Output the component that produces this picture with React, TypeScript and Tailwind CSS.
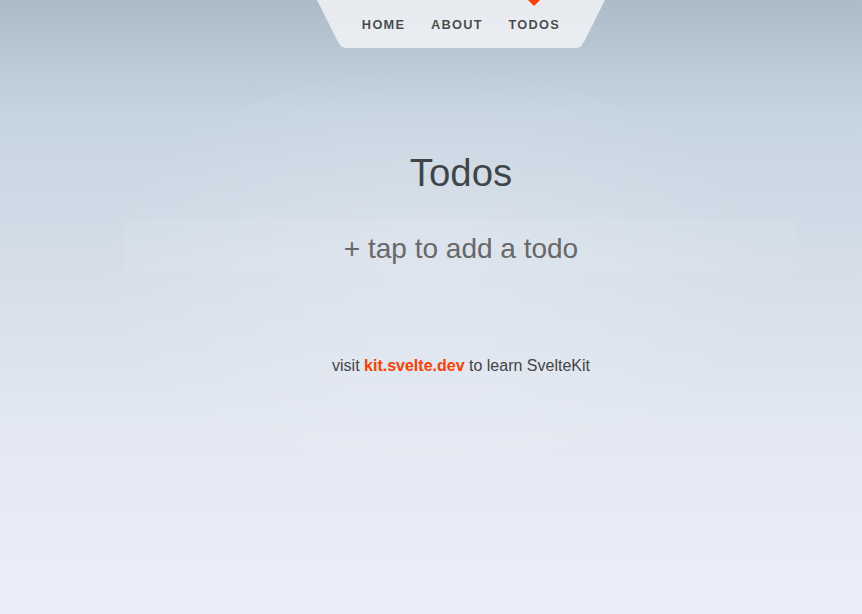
import { useState } from 'react';

const links = [
  { label: 'Home', current: false },
  { label: 'About', current: false },
  { label: 'Todos', current: true },
];

function Corner({ flip }: { flip?: boolean }) {
  return (
    <svg viewBox="0 0 2 3" width="32" height="48" className={flip ? '-scale-x-100 block' : 'block'} aria-hidden="true">
      <path d="M0,0 L1,2 C1.5,3 1.5,3 2,3 L2,0 Z" fill="rgba(255,255,255,0.7)" />
    </svg>
  );
}

export default function App() {
  const [text, setText] = useState('');

  return (
    <div className="min-h-screen w-full pl-[60px] font-['Liberation_Sans',Arial,sans-serif] text-[#444] bg-[radial-gradient(40%_35%_at_50%_45%,rgba(255,255,255,0.2)_0%,rgba(255,255,255,0)_100%),linear-gradient(180deg,#adbac8_0%,#c6d4e1_18%,#d4dde8_42%,#e3e8f2_70%,#eceffa_100%)]">
      {/* Header */}
      <header className="flex justify-center">
        <nav className="flex">
          <Corner />
          <ul className="flex h-12 items-stretch bg-white/70">
            {links.map(({ label, current }) => (
              <li key={label} className="relative flex">
                {current && (
                  <span className="absolute left-[calc(50%-6px)] top-0 h-0 w-0 border-[6px] border-transparent border-t-[#ff3e00]" />
                )}
                <a className="flex h-full items-center px-[1em] pt-[2px] text-[12.8px] font-bold uppercase tracking-[0.1em] text-black/70">
                  {label}
                </a>
              </li>
            ))}
          </ul>
          <Corner flip />
        </nav>
      </header>

      {/* Main */}
      <main className="mx-auto flex w-full max-w-[1024px] flex-col px-4 pt-4">
        <section className="mx-auto mt-16 w-full max-w-[672px] leading-none">
          <h1 className="mt-[26px] mb-[27px] text-center text-[38.4px] text-black/70">Todos</h1>
          <form className="mb-2" onSubmit={(e) => e.preventDefault()}>
            <input
              value={text}
              onChange={(e) => setText(e.target.value)}
              placeholder="+ tap to add a todo"
              className="box-border h-[54px] w-full rounded-lg border border-transparent bg-white/5 px-[1em] pt-[0.4em] pb-[0.2em] text-center text-[28px] leading-none outline-none placeholder:text-[#686868]"
            />
          </form>
        </section>
      </main>

      {/* Footer */}
      <footer className="flex flex-col items-center justify-center px-10 pt-[76px] pb-10">
        <p className="text-base leading-[18px]">
          visit <a className="font-bold text-[#ff3e00]">kit.svelte.dev</a> to learn SvelteKit
        </p>
      </footer>
    </div>
  );
}
